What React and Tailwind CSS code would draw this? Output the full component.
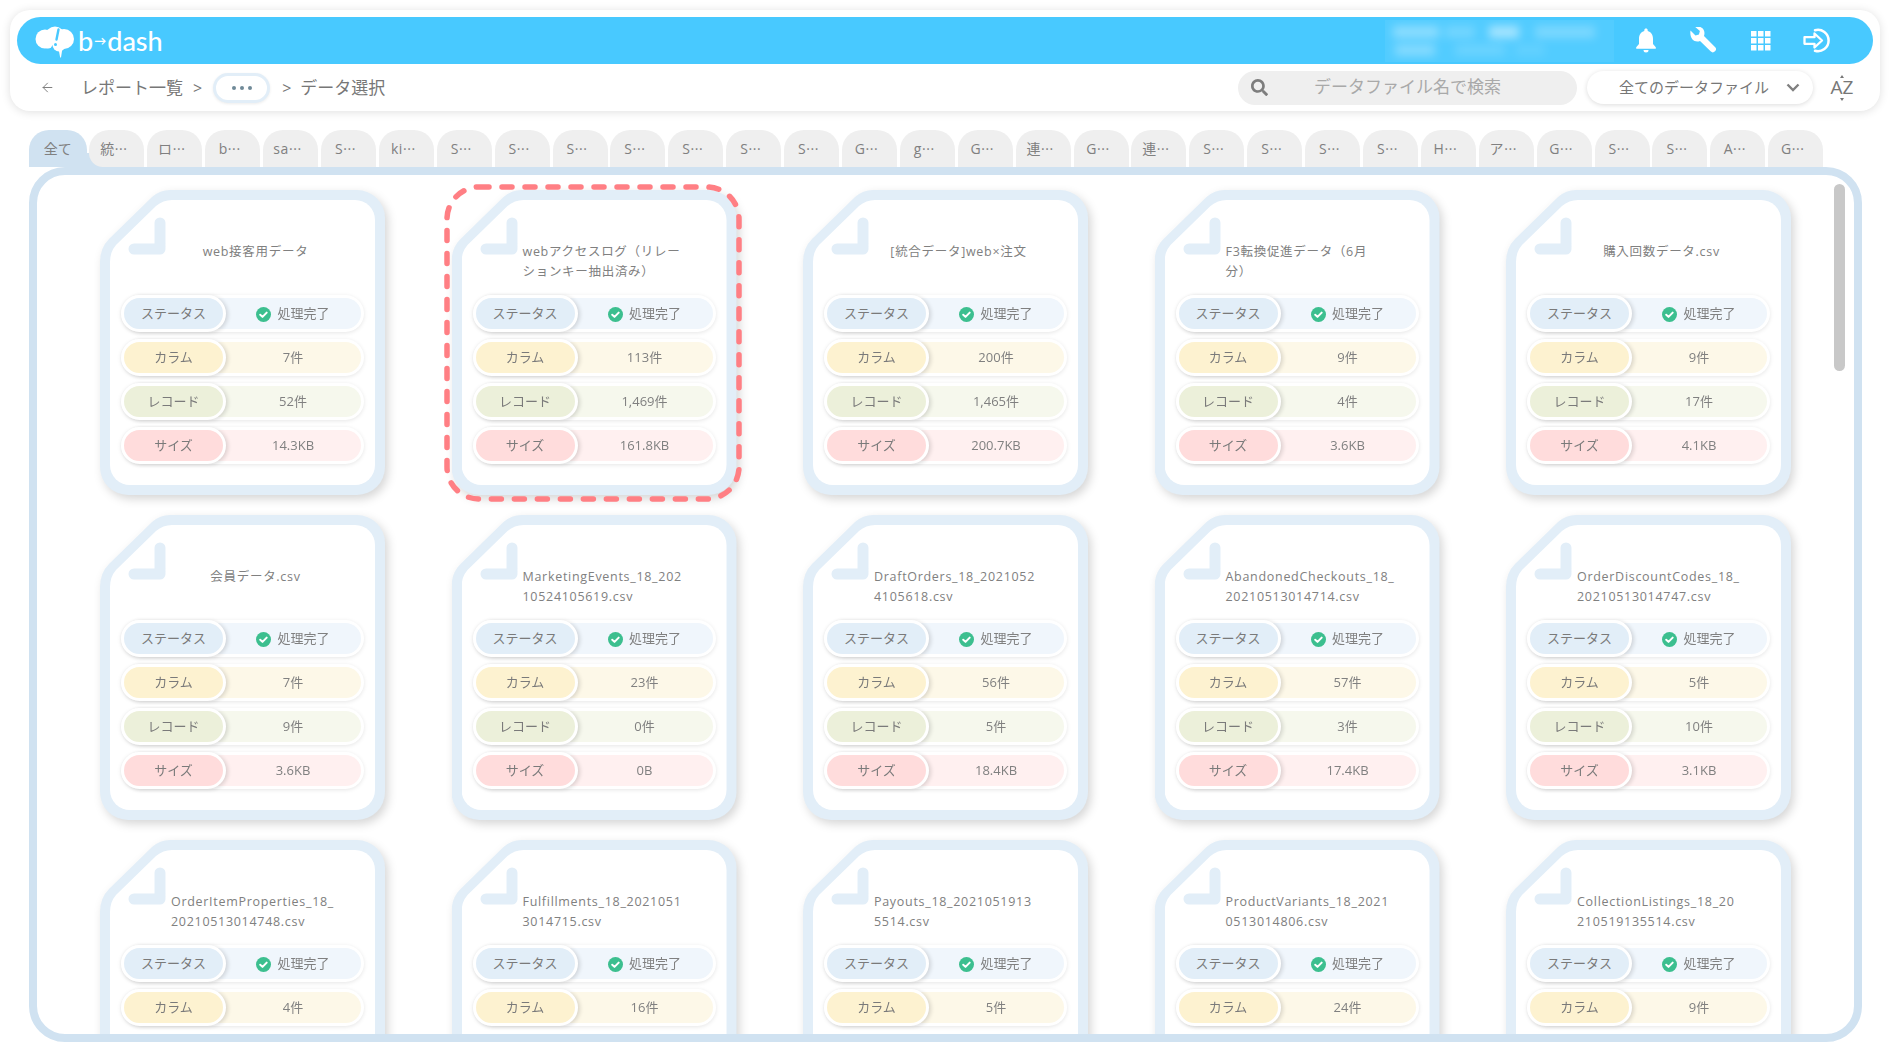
import React from "react";
import { ArrowLeft } from "lucide-react";
import { FaSearch } from "react-icons/fa";

const TABS = ["統···","ロ···","b···","sa···","S···","ki···","S···","S···","S···","S···","S···","S···","S···","G···","g···","G···","連···","G···","連···","S···","S···","S···","S···","H···","ア···","G···","S···","S···","A···","G···"];

const CARDS = [
  { t: ["web接客用データ"], c: "7件", r: "52件", s: "14.3KB" },
  { t: ["webアクセスログ（リレー", "ションキー抽出済み）"], c: "113件", r: "1,469件", s: "161.8KB", sel: true },
  { t: ["[統合データ]web×注文"], c: "200件", r: "1,465件", s: "200.7KB" },
  { t: ["F3転換促進データ（6月", "分）"], c: "9件", r: "4件", s: "3.6KB" },
  { t: ["購入回数データ.csv"], c: "9件", r: "17件", s: "4.1KB" },
  { t: ["会員データ.csv"], c: "7件", r: "9件", s: "3.6KB" },
  { t: ["MarketingEvents_18_202", "10524105619.csv"], c: "23件", r: "0件", s: "0B" },
  { t: ["DraftOrders_18_2021052", "4105618.csv"], c: "56件", r: "5件", s: "18.4KB" },
  { t: ["AbandonedCheckouts_18_", "20210513014714.csv"], c: "57件", r: "3件", s: "17.4KB" },
  { t: ["OrderDiscountCodes_18_", "20210513014747.csv"], c: "5件", r: "10件", s: "3.1KB" },
  { t: ["OrderItemProperties_18_", "20210513014748.csv"], c: "4件" },
  { t: ["Fulfillments_18_2021051", "3014715.csv"], c: "16件" },
  { t: ["Payouts_18_2021051913", "5514.csv"], c: "5件" },
  { t: ["ProductVariants_18_2021", "0513014806.csv"], c: "24件" },
  { t: ["CollectionListings_18_20", "210519135514.csv"], c: "9件" },
];

function CheckIcon() {
  return (
    <svg width="15" height="15" viewBox="0 0 15 15" className="mr-[6px] shrink-0">
      <circle cx="7.5" cy="7.5" r="7.5" fill="#3cbf8f" />
      <path d="M4.2 7.7l2.3 2.2 4.2-4.3" fill="none" stroke="#fff" strokeWidth="2" strokeLinecap="round" strokeLinejoin="round" />
    </svg>
  );
}

function Row({ label, pill, bg, children }) {
  return (
    <div className="flex h-[37px] w-[243px] items-stretch rounded-full bg-white p-[3px] shadow-[0_1px_4px_rgba(0,0,0,0.1)]">
      <div className={`flex flex-1 items-stretch rounded-full ${bg}`}>
        <div className={`-my-[3px] -ml-[3px] flex w-[105px] shrink-0 items-center justify-center rounded-full border-[3px] border-white pt-[1px] text-[#7a7a7a] shadow-[2px_1px_4px_rgba(0,0,0,0.14)] ${pill}`}>
          {label}
        </div>
        <div className="-ml-[1px] flex flex-1 items-center justify-center pt-[1px] text-[#808080]">{children}</div>
      </div>
    </div>
  );
}

function Card({ card }) {
  return (
    <div className="relative h-[305px] w-[285px] shrink-0">
      <div className="h-full w-full drop-shadow-[3px_4px_5px_rgba(0,0,0,0.16)]">
        <div className="h-full w-full bg-[#e2eef8] p-[10px] [clip-path:path('M70_0H257A28_28_0_0_1_285_28V277A28_28_0_0_1_257_305H28A28_28_0_0_1_0_277V72Q0_58_9_49L52_7Q60_0_70_0Z')]">
          <div className="relative h-full w-full bg-white pt-[41px] [clip-path:path('M62_0H245A20_20_0_0_1_265_20V265A20_20_0_0_1_245_285H20A20_20_0_0_1_0_265V62Q0_52_6_45L46_6Q53_0_62_0Z')]">
            <svg width="40" height="40" viewBox="0 0 40 40" className="absolute left-[18px] top-[17px]">
              <path d="M32 6V32H6" fill="none" stroke="#e2eef8" strokeWidth="11" strokeLinecap="round" strokeLinejoin="round" />
            </svg>
            <div className="ml-[61px] flex h-[54px] w-[169px] justify-center pt-[1px]">
              <div className={`text-[12.5px] leading-[20px] tracking-[0.7px] whitespace-nowrap text-[#808080] ${card.t.length > 1 ? "w-full" : ""}`}>
                {card.t.map((l) => (
                  <div key={l}>{l}</div>
                ))}
              </div>
            </div>
            <div className="flex flex-col gap-[6.9px] px-[11px] text-[13px]">
              <Row label="ステータス" pill="bg-[#e2eef8]" bg="bg-[#f0f6fc]">
                <CheckIcon />
                処理完了
              </Row>
              <Row label="カラム" pill="bg-[#fdf2d0]" bg="bg-[#fdf8e8]">{card.c}</Row>
              {card.r && <Row label="レコード" pill="bg-[#ecf0da]" bg="bg-[#f6f8ed]">{card.r}</Row>}
              {card.s && <Row label="サイズ" pill="bg-[#ffdcdc]" bg="bg-[#fff0f0]">{card.s}</Row>}
            </div>
          </div>
        </div>
      </div>
      {card.sel && (
        <svg width="298" height="318" viewBox="0 0 298 318" className="pointer-events-none absolute -left-[8px] -top-[6px]">
          <rect x="3" y="3" width="292" height="312" rx="32" fill="none" stroke="#ff7f84" strokeWidth="5.5" strokeLinecap="round" strokeDasharray="10 13" />
        </svg>
      )}
    </div>
  );
}

function Logo() {
  return (
    <div className="ml-[18px] flex items-center">
      <svg width="40" height="32" viewBox="0 0 40 32" className="mt-[2px]">
        <g fill="#fff">
          <circle cx="10" cy="13" r="9.5" />
          <circle cx="20" cy="10" r="9.5" />
          <circle cx="29" cy="13" r="10" />
          <circle cx="24" cy="19" r="6.5" />
          <circle cx="13" cy="18" r="4.5" />
          <path d="M23 20l4.5 2-1.5 9.5h-.8z" />
        </g>
        <path d="M23.5 3.5l-2 10" stroke="#48c9ff" strokeWidth="2.4" strokeLinecap="round" />
        <circle cx="20.5" cy="18.5" r="1.5" fill="#48c9ff" />
      </svg>
      <span className="ml-[3px] flex items-center font-['Lato',sans-serif] text-[27px] leading-none font-medium text-white">
        b<span className="mx-[1px] text-[12px] font-bold">→</span>dash
      </span>
    </div>
  );
}

function Redacted() {
  const rows = [
    [[8, 46, 0.35], [60, 30, 0.2], [104, 30, 0.5], [150, 60, 0.25]],
    [[10, 40, 0.3], [70, 50, 0.15], [130, 30, 0.1]],
  ];
  return (
    <div className="mr-[22px] flex h-[42px] w-[229px] flex-col justify-around overflow-hidden bg-[#52ccff] py-[3px]">
      {rows.map((r, i) => (
        <div key={i} className="flex h-[12px] blur-[5px]">
          {r.map(([x, w, o], j) => (
            <div key={j} className="h-full bg-white" style={{ marginLeft: j === 0 ? x : x - r[j - 1][0] - r[j - 1][1], width: w, opacity: o }} />
          ))}
        </div>
      ))}
    </div>
  );
}

function HeaderIcons() {
  return (
    <div className="flex items-center">
      <svg width="22" height="25" viewBox="0 0 22 25" fill="#fff" className="mr-[32px] -translate-x-[1px]">
        <path d="M11 0.5c-1 0-1.7.7-1.7 1.7v.9C6 4 4 7 4 10.8v5.2L1.2 19.2v1.6h19.6v-1.6L18 16v-5.2c0-3.8-2-6.8-5.3-7.7v-.9c0-1-.7-1.7-1.7-1.7z" />
        <path d="M8.5 22a2.5 2.5 0 0 0 5 0z" />
      </svg>
      <svg width="27" height="27" viewBox="0 0 27 27" fill="#fff" className="mr-[34px] -translate-x-[1px]">
        <path d="M1.5 3.5l5 5 3.4-1 1-3.4-5-4.4c4-1 8.200.6 9.300 4.500.5 1.800.2 3.400-.2 4.800L26 19.900a3.100 3.100 0 0 1-4.400 4.400L11 13.900c-2.500 1-5.700.7-7.700-1.700C1.500 10 1 6.500 1.500 3.500z" />
      </svg>
      <svg width="20" height="20" viewBox="0 0 20 20" fill="#fff" className="mr-[32px]">
        {[0, 7, 14].flatMap((y) => [0, 7, 14].map((x) => <rect key={`${x}-${y}`} x={x} y={y} width="5.500" height="5.500" />))}
      </svg>
      <svg width="32" height="25" viewBox="0 0 32 25" fill="none" stroke="#fff" strokeLinejoin="round" strokeLinecap="round">
        <path d="M12 2.200a10.700 10.700 0 1 1 0 20.600" strokeWidth="2.500" />
        <path d="M1.500 9.200h10V5.500l7.500 7-7.500 7v-3.700h-10z" strokeWidth="2.300" />
      </svg>
    </div>
  );
}

export default function App() {
  return (
    <div className="h-[1063px] w-[1890px] overflow-hidden bg-white font-['Open_Sans','Noto_Sans_CJK_JP',sans-serif]">
      <div className="mx-[10px] mt-[10px] h-[101px] rounded-[20px] bg-white px-[7px] pt-[7px] shadow-[0_1px_10px_rgba(0,0,0,0.13)]">
        <div className="flex h-[47px] items-center justify-between rounded-full bg-[#48c9ff] pr-[38px]">
          <Logo />
          <div className="flex items-center">
            <Redacted />
            <HeaderIcons />
          </div>
        </div>
        <div className="flex h-[47px] items-center pr-[19px]">
          <ArrowLeft size={15} strokeWidth={1.5} className="ml-[23px] text-[#777]" />
          <span className="ml-[26px] text-[17px] text-[#777]">レポート一覧</span>
          <span className="ml-[10px] text-[16px] text-[#777]">&gt;</span>
          <div className="ml-[11px] flex h-[30px] w-[57px] items-center justify-center gap-[4px] rounded-full border-[3px] border-[#e2eef8] bg-white shadow-[0_1px_3px_rgba(0,0,0,0.08)]">
            <span className="h-[4px] w-[4px] rounded-full bg-[#6f8a98]" />
            <span className="h-[4px] w-[4px] rounded-full bg-[#6f8a98]" />
            <span className="h-[4px] w-[4px] rounded-full bg-[#6f8a98]" />
          </div>
          <span className="ml-[12px] text-[16px] text-[#777]">&gt;</span>
          <span className="ml-[9px] text-[17px] text-[#777]">データ選択</span>
          <div className="ml-auto flex h-[34px] w-[339px] items-center rounded-full bg-[#efefef] pb-[1px]">
            <FaSearch size={17} className="ml-[13px] text-[#7d7d7d]" />
            <span className="ml-[46px] text-[17px] text-[#a9a9a9]">データファイル名で検索</span>
          </div>
          <div className="ml-[10px] flex h-[33px] w-[226px] items-center rounded-full bg-white shadow-[0_1px_5px_rgba(0,0,0,0.14)]">
            <span className="ml-[32px] text-[15px] text-[#777]">全てのデータファイル</span>
            <svg width="14" height="9" viewBox="0 0 14 9" className="ml-[17px]">
              <path d="M1.500 1.500L7 7l5.500-5.500" fill="none" stroke="#808080" strokeWidth="2.400" />
            </svg>
          </div>
          <div className="relative ml-[17px] flex h-[24px] w-[24px] items-center justify-center text-[19px] leading-none text-[#777]">
            AZ
            <span className="absolute left-[10px] top-[-1px] h-0 w-0 border-x-[2px] border-b-[3px] border-x-transparent border-b-[#777]" />
            <span className="absolute bottom-[-1px] left-[10px] h-0 w-0 border-x-[2px] border-t-[3px] border-x-transparent border-t-[#777]" />
          </div>
        </div>
      </div>

      <div className="ml-[29px] mt-[19px] flex h-[37px] gap-[2.900px] text-[14px] text-[#808080]">
        <div className="flex w-[57.500px] items-center justify-center rounded-t-[20px] bg-[#d0e2f1]">全て</div>
        {TABS.map((t, i) => (
          <div
            key={i}
            className={`relative flex w-[55px] items-center justify-center ${i === 0 ? "before:absolute before:-left-[3px] before:bottom-0 before:h-[14px] before:w-[16px] before:bg-[#d0e2f1]" : ""}`}
          >
            <div className={`relative flex h-full w-full items-center justify-center rounded-t-[20px] bg-[#efefef] pr-[6px] tracking-[0.6px] ${i === 0 ? "rounded-bl-[14px]" : ""}`}>{t}</div>
          </div>
        ))}
      </div>

      <div className="relative ml-[29px] h-[875px] w-[1832.500px] overflow-hidden rounded-[36px] border-8 border-[#d0e2f1] bg-white">
        <div className="flex flex-wrap gap-x-[66.500px] gap-y-[20px] pl-[63px] pt-[15px]">
          {CARDS.map((c, i) => (
            <Card key={i} card={c} />
          ))}
        </div>
        <div className="absolute right-[9px] top-[9px] h-[187px] w-[10.500px] rounded-full bg-[#c8c8c8]" />
      </div>
    </div>
  );
}
